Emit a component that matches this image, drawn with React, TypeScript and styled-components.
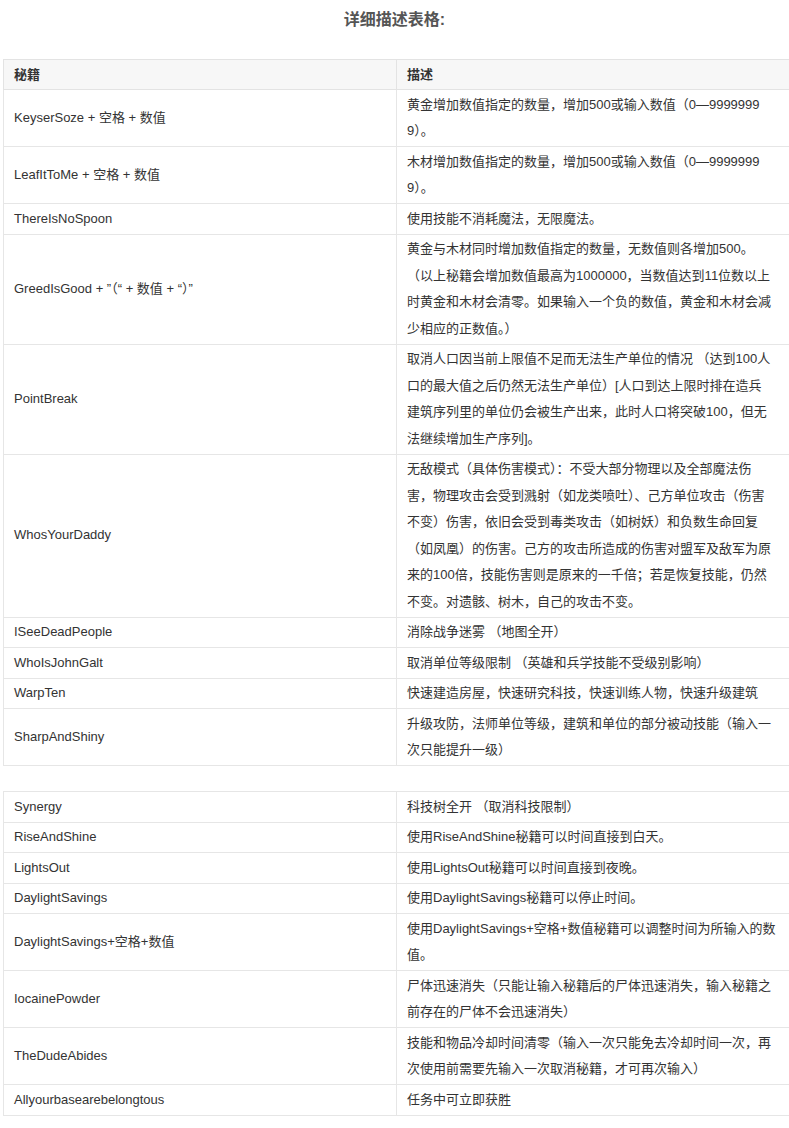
import React from "react";
import styled, { createGlobalStyle } from "styled-components";

const Global = createGlobalStyle`
  html, body { margin: 0; padding: 0; background: #fff; overflow-x: hidden; }
  body { font-family: "Liberation Sans", "Noto Sans CJK SC", sans-serif; color: #333; }
`;

const Page = styled.div`
  width: 789px;
  overflow: hidden;
  padding: 9px 0 0 3px;
  box-sizing: border-box;
`;

const Title = styled.h3`
  margin: 0 0 28px;
  text-align: center;
  font-size: 16px;
  font-weight: bold;
  color: #555;
  line-height: 22px;
  padding-right: 3px;
`;

const Table = styled.table<{ $gap?: boolean }>`
  width: 800px;
  border-collapse: collapse;
  table-layout: fixed;
  font-size: 13px;
  margin-bottom: ${(p) => (p.$gap ? "22px" : "0")};
`;

const Th = styled.th`
  background: #f7f7f7;
  border: 1px solid #e3e3e3;
  text-align: left;
  font-weight: bold;
  padding: 1px 10px;
  line-height: 27px;
  color: #333;
`;

const Td = styled.td`
  border: 1px solid #e6e6e6;
  padding: 1.5px 10px;
  line-height: 26.5px;
  vertical-align: middle;
  color: #333;
  white-space: nowrap;
`;

const EmptyRow = styled.tr`
  height: 3px;
  td { padding: 0; line-height: 0; height: 3px; }
`;

type Row = [string, string[]];

const rows1: Row[] = [
  ["KeyserSoze + 空格 + 数值", ["黄金增加数值指定的数量，增加500或输入数值（0—9999999", "9）。"]],
  ["LeafItToMe + 空格 + 数值", ["木材增加数值指定的数量，增加500或输入数值（0—9999999", "9）。"]],
  ["ThereIsNoSpoon", ["使用技能不消耗魔法，无限魔法。"]],
  ["GreedIsGood + ”（“ + 数值 + “）”", [
    "黄金与木材同时增加数值指定的数量，无数值则各增加500。",
    "（以上秘籍会增加数值最高为1000000，当数值达到11位数以上",
    "时黄金和木材会清零。如果输入一个负的数值，黄金和木材会减",
    "少相应的正数值。）",
  ]],
  ["PointBreak", [
    "取消人口因当前上限值不足而无法生产单位的情况 （达到100人",
    "口的最大值之后仍然无法生产单位）[人口到达上限时排在造兵",
    "建筑序列里的单位仍会被生产出来，此时人口将突破100，但无",
    "法继续增加生产序列]。",
  ]],
  ["WhosYourDaddy", [
    "无敌模式（具体伤害模式）：不受大部分物理以及全部魔法伤",
    "害，物理攻击会受到溅射（如龙类喷吐）、己方单位攻击（伤害",
    "不变）伤害，依旧会受到毒类攻击（如树妖）和负数生命回复",
    "（如凤凰）的伤害。己方的攻击所造成的伤害对盟军及敌军为原",
    "来的100倍，技能伤害则是原来的一千倍；若是恢复技能，仍然",
    "不变。对遗骸、树木，自己的攻击不变。",
  ]],
  ["ISeeDeadPeople", ["消除战争迷雾 （地图全开）"]],
  ["WhoIsJohnGalt", ["取消单位等级限制 （英雄和兵学技能不受级别影响）"]],
  ["WarpTen", ["快速建造房屋，快速研究科技，快速训练人物，快速升级建筑"]],
  ["SharpAndShiny", ["升级攻防，法师单位等级，建筑和单位的部分被动技能（输入一", "次只能提升一级）"]],
];

const rows2: Row[] = [
  ["Synergy", ["科技树全开 （取消科技限制）"]],
  ["RiseAndShine", ["使用RiseAndShine秘籍可以时间直接到白天。"]],
  ["LightsOut", ["使用LightsOut秘籍可以时间直接到夜晚。"]],
  ["DaylightSavings", ["使用DaylightSavings秘籍可以停止时间。"]],
  ["DaylightSavings+空格+数值", ["使用DaylightSavings+空格+数值秘籍可以调整时间为所输入的数", "值。"]],
  ["IocainePowder", ["尸体迅速消失（只能让输入秘籍后的尸体迅速消失，输入秘籍之", "前存在的尸体不会迅速消失）"]],
  ["TheDudeAbides", ["技能和物品冷却时间清零（输入一次只能免去冷却时间一次，再", "次使用前需要先输入一次取消秘籍，才可再次输入）"]],
  ["Allyourbasearebelongtous", ["任务中可立即获胜"]],
];

const Lines = ({ lines }: { lines: string[] }) => (
  <>
    {lines.map((l, i) => (
      <React.Fragment key={i}>
        {i > 0 && <br />}
        {l}
      </React.Fragment>
    ))}
  </>
);

export default function App() {
  return (
    <>
      <Global />
      <Page>
        <Title>详细描述表格:</Title>
        <Table $gap>
          <colgroup>
            <col style={{ width: 393 }} />
            <col />
          </colgroup>
          <thead>
            <tr>
              <Th>秘籍</Th>
              <Th>描述</Th>
            </tr>
          </thead>
          <tbody>
            {rows1.map(([k, d]) => (
              <tr key={k}>
                <Td>{k}</Td>
                <Td><Lines lines={d} /></Td>
              </tr>
            ))}
            <EmptyRow><td /><td /></EmptyRow>
          </tbody>
        </Table>
        <Table>
          <colgroup>
            <col style={{ width: 393 }} />
            <col />
          </colgroup>
          <tbody>
            {rows2.map(([k, d]) => (
              <tr key={k}>
                <Td>{k}</Td>
                <Td><Lines lines={d} /></Td>
              </tr>
            ))}
          </tbody>
        </Table>
      </Page>
    </>
  );
}
